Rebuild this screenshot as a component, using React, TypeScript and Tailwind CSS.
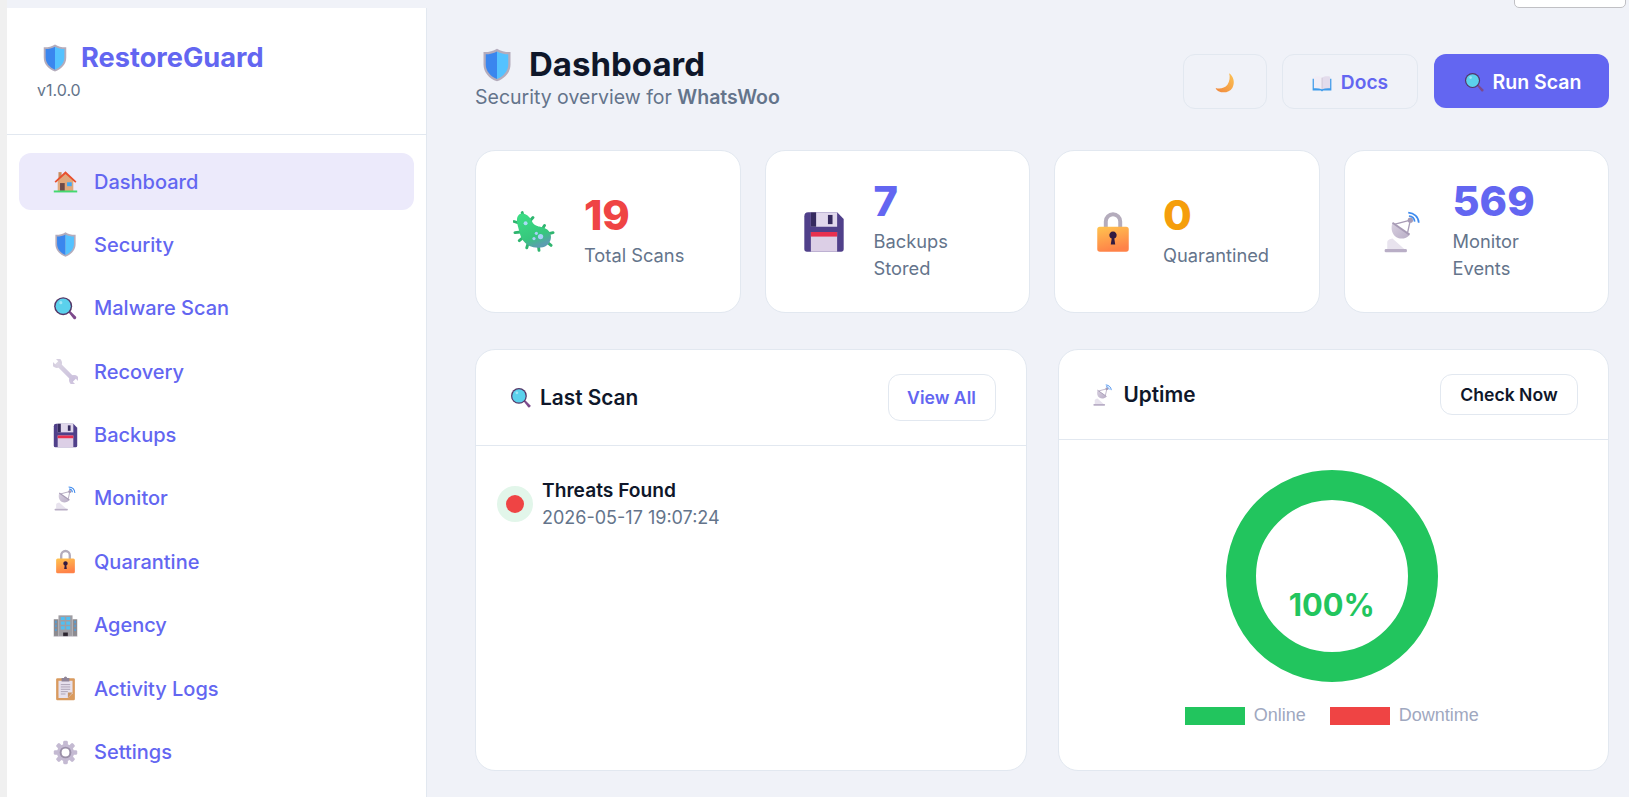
import type { ReactNode } from "react"

const Svg = ({ size = 24, children }: { size?: number; children: ReactNode }) => (
  <svg width={size} height={size} viewBox="0 0 32 32" className="shrink-0">
    {children}
  </svg>
)

type IconProps = { size?: number }

const Shield = ({ size }: IconProps) => (
  <Svg size={size}>
    <path d="M16 1.500c3.500 2.300 8 3.200 12 3v11c0 7-5 12.500-12 15-7-2.500-12-8-12-15v-11c4 .2 8.500-.7 12-3z" fill="#b4acbc" />
    <path d="M16 4v24.500C10.500 26.200 6 21.500 6 15.500V6.500c3.600 0 7-.8 10-2.500z" fill="#3a86ee" />
    <path d="M16 4v24.500c5.500-2.300 10-7 10-13V6.500c-3.600 0-7-.8-10-2.500z" fill="#54c2ff" />
  </Svg>
)

const House = ({ size }: IconProps) => (
  <Svg size={size}>
    <path d="M7 4h4v8H7z" fill="#c98d5f" />
    <path d="M6 13 16 5l10 8v15H6z" fill="#e0a87c" />
    <path d="M9 18h6v10H9z" fill="#6d4a48" />
    <path d="M18 17h6v5h-6z" fill="#3fa9f5" />
    <path d="M2 16 16 3l14 13-1.500 1.500L16 6.500 3.500 17.500z" fill="#e8502f" />
    <path d="M1 27.500h30V30H1z" fill="#44d96f" />
  </Svg>
)

const Magnifier = ({ size }: IconProps) => (
  <Svg size={size}>
    <path d="m19.500 20.500 2-2 8 8a2.200 2.200 0 0 1-3 3z" fill="#7d4a8c" />
    <circle cx="13" cy="13" r="11.500" fill="#533566" />
    <circle cx="13" cy="13" r="9.700" fill="#5bd1ec" />
    <circle cx="10" cy="8.500" r="2" fill="#9fe6f5" />
  </Svg>
)

const Wrench = ({ size }: IconProps) => (
  <Svg size={size}>
    <g transform="rotate(45 16 16)">
      <circle cx="0.500" cy="16" r="6.500" fill="#d6cfe0" />
      <circle cx="31.500" cy="16" r="6.500" fill="#cfc4de" />
      <rect x="0" y="13.200" width="32" height="5.600" fill="url(#wrenchGrad)" />
      <rect x="-7" y="13.300" width="7" height="5.400" fill="#fff" />
      <rect x="32" y="13.300" width="7" height="5.400" fill="#fff" />
    </g>
  </Svg>
)

const Floppy = ({ size }: IconProps) => (
  <Svg size={size}>
    <path d="M4 1h22l5 5v23a2 2 0 0 1-2 2H3a2 2 0 0 1-2-2V4a3 3 0 0 1 3-3z" fill="#50408a" />
    <path d="M6 1h20v11H6z" fill="#e1d8ec" />
    <path d="M6 1h4v11H6z" fill="#352a5e" />
    <path d="M19 3h3.500v7H19z" fill="#352a5e" />
    <path d="M6 16h20v15H6z" fill="#dccfe6" />
    <path d="M6 16h20v3.500H6z" fill="#e8304f" />
  </Svg>
)

const Satellite = ({ size }: IconProps) => (
  <Svg size={size}>
    <path d="M4 29v-5c0-2 2-2.500 4-3l9 8z" fill="#e8e3ee" />
    <rect x="2" y="29" width="17" height="2.500" rx="1" fill="#b9aec6" />
    <path d="M8 9 21 18c-2 3-7 4-10 2-3.500-2-4.500-7-3-11z" fill="url(#dishGrad)" />
    <path d="M8 9 21 18" stroke="#a79bb5" strokeWidth="1.400" />
    <path d="m10 10 11.600-3M19.500 16.500 21.600 7" stroke="#a79bb5" strokeWidth="1" />
    <circle cx="21.600" cy="7" r="2" fill="#a79bb5" />
    <path d="M20 1.300c4.500.3 7.800 3.300 8 7.600M20.500 3.800c2.400.2 4.200 2 4.400 4.300" stroke="#3f8bee" strokeWidth="1.300" fill="none" />
  </Svg>
)

const Lock = ({ size }: IconProps) => (
  <Svg size={size}>
    <path d="M9 14V8a7 7 0 0 1 14 0v6h-3V8a4 4 0 0 0-8 0v6z" fill="#b4acbc" />
    <rect x="4" y="12" width="24" height="19" rx="2" fill="url(#lockGrad)" />
    <path d="M14.300 25.500h3.400l-.7-4.500a2.800 2.800 0 1 0-2 0z" fill="#321b41" />
  </Svg>
)

const Building = ({ size }: IconProps) => (
  <Svg size={size}>
    <path d="M1 8h6v22H1zM25 8h6v22h-6z" fill="#8d8b90" />
    <path d="M7 3h18v27H7z" fill="#9f9da3" />
    <path d="M3 10h1.500v3H3zM3 15h1.500v3H3zM3 20h1.500v3H3zM27.500 10H29v3h-1.500zM27.500 15H29v3h-1.500zM27.500 20H29v3h-1.500z" fill="#40a4f0" />
    <path d="M10 5h5v4h-5zM17 5h5v4h-5zM10 11h5v4h-5zM17 11h5v4h-5zM10 17h5v4h-5zM17 17h5v4h-5z" fill="#51bff2" />
    <path d="M13 25h6v5h-6z" fill="#2c2530" />
    <path d="M1 30h30" stroke="#d6d2da" strokeWidth="1" />
  </Svg>
)

const Clipboard = ({ size }: IconProps) => (
  <Svg size={size}>
    <rect x="4" y="3" width="24" height="28" rx="1.500" fill="#d99a5e" />
    <path d="M7 6h18v16l-6 6H7z" fill="#e6e0ec" />
    <path d="M25 21h-6v7z" fill="#c79366" />
    <path d="M11 2.500h3a2 2 0 0 1 4 0h3V7H11z" fill="#8f8497" />
    <path d="M10 11h12M10 14h12M10 17h12M10 20h9M10 23h6" stroke="#9d93a8" strokeWidth="1" />
  </Svg>
)

const Gear = ({ size }: IconProps) => (
  <Svg size={size}>
    {[0, 45, 90, 135, 180, 225, 270, 315].map((angle) => (
      <rect key={angle} x="13" y="1" width="6" height="8" rx="1.800" fill="#c4bad2" transform={`rotate(${angle} 16 16)`} />
    ))}
    <circle cx="16" cy="16" r="11" fill="#c4bad2" />
    <circle cx="16" cy="16" r="7.500" fill="#9a8fa8" />
    <circle cx="16" cy="16" r="5" fill="#fff" />
  </Svg>
)

const Microbe = ({ size }: IconProps) => (
  <Svg size={size}>
    <g stroke="#2fb56f" strokeWidth="2.200" strokeLinecap="round">
      <path d="M7 1.200 8 6M15.200 5 12.500 8M24 11 21.500 15M30.500 16.500l-4 1M29 26.200l-3-2.500M19.800 30l-.5-4M10.500 28l1-3.500M4.800 22.600l3-2.500M1.500 16.500l4.500-.5M.8 8l4.500 1.500" />
    </g>
    <path d="M6 3c3-1 6 2 7.500 5 1 2.500 2.500 4 5.500 4.500 4 .5 8.500 2 9 6.500.4 4-2.500 7.500-7 8-5 .6-10-1.500-13-5.500C6 18.500 5.500 14 4.500 11 3.500 8 3.500 4 6 3z" fill="url(#bugGrad)" stroke="url(#bugGrad)" strokeWidth="1.800" />
    <circle cx="9.600" cy="9.400" r="1.500" fill="#a8dcf5" />
    <circle cx="21" cy="19.500" r="2" fill="#a8d0f8" />
    <circle cx="17.800" cy="17" r="1.200" fill="#a8d0f8" />
    <circle cx="16" cy="21" r="1.200" fill="#a8d0f8" />
  </Svg>
)

const Moon = ({ size }: IconProps) => (
  <Svg size={size}>
    <path d="M21 4c6 4 7.500 12 4 18-3.500 5.500-11 7-17 4-2-1-3-2.500-3.500-4 5 1.500 11 .5 14.500-4 2.800-4 3.500-9.500 2-14z" fill="url(#moonGrad)" />
  </Svg>
)

const Book = ({ size }: IconProps) => (
  <Svg size={size}>
    <path d="M1 9h30v19H18l-2 1.500L14 28H1z" fill="#3f9bea" />
    <path d="M3 6c4-1 9-1 13 1.500V26c-4-1.500-9-2-13-1.500z" fill="#f1edf6" />
    <path d="M29 6c-4-1-9-1-13 1.500V26c4-1.500 9-2 13-1.500z" fill="#e3dcec" />
    <path d="M16 7.500V26" stroke="#b4acbc" strokeWidth=".8" />
  </Svg>
)

const navItems = [
  { label: "Dashboard", icon: House, size: 25, active: true },
  { label: "Security", icon: Shield, size: 27 },
  { label: "Malware Scan", icon: Magnifier, size: 25 },
  { label: "Recovery", icon: Wrench, size: 25 },
  { label: "Backups", icon: Floppy, size: 25 },
  { label: "Monitor", icon: Satellite, size: 25 },
  { label: "Quarantine", icon: Lock, size: 25 },
  { label: "Agency", icon: Building, size: 25 },
  { label: "Activity Logs", icon: Clipboard, size: 25 },
  { label: "Settings", icon: Gear, size: 25 },
]

const stats = [
  { value: "19", label: "Total Scans", color: "text-[#ef4444]", icon: Microbe },
  { value: "7", label: "Backups Stored", color: "text-[#6366f1]", icon: Floppy },
  { value: "0", label: "Quarantined", color: "text-[#f59e0b]", icon: Lock },
  { value: "569", label: "Monitor Events", color: "text-[#6366f1]", icon: Satellite },
]

function Sidebar() {
  return (
    <aside className="mt-2 flex w-[420px] shrink-0 flex-col border-r border-[#e2e8f0] bg-white">
      <div className="h-[127px] border-b border-[#e2e8f0] pl-[30px] pt-[34px]">
        <div className="flex h-[32px] items-center gap-[11px] pl-[3px] text-[27.2px] font-bold text-[#6366f1]">
          <Shield size={30} />
          <span>RestoreGuard</span>
        </div>
        <div className="mt-[4px] text-[16px] leading-[24px] text-[#64748b]">v1.0.0</div>
      </div>
      <nav className="flex flex-col gap-[6.4px] px-3 pt-[18px]">
        {navItems.map((item) => (
          <a
            key={item.label}
            className={`flex h-[57px] items-center gap-4 rounded-[12px] pl-[34px] text-[20px] font-medium text-[#6366f1] ${item.active ? "bg-[#eceafb]" : ""}`}
          >
            <span className="flex w-[25px] justify-center">
              <item.icon size={item.size} />
            </span>
            <span>{item.label}</span>
          </a>
        ))}
      </nav>
    </aside>
  )
}

function StatCard({ stat }: { stat: (typeof stats)[number] }) {
  return (
    <div className="flex h-[163px] items-center gap-[29px] rounded-[20px] border border-[#e2e8f0] bg-white pl-[37px] pr-4">
      <stat.icon size={42} />
      <div className="pb-[6px]">
        <div className={`text-[41.6px] font-extrabold leading-[53px] ${stat.color}`}>{stat.value}</div>
        <div className="max-w-[115px] text-[18.3px] leading-[27px] text-[#64748b]">{stat.label}</div>
      </div>
    </div>
  )
}

function Donut() {
  return (
    <div className="relative mx-auto h-[212px] w-[212px]">
      <svg viewBox="0 0 212 212" className="h-full w-full">
        <circle cx="106" cy="106" r="91" fill="none" stroke="#22c55e" strokeWidth="30" />
      </svg>
      <div className="absolute inset-x-0 top-[116px] text-center text-[30.8px] font-bold leading-[38px] text-[#22c55e]">100%</div>
    </div>
  )
}

export default function App() {
  return (
    <div className="relative flex h-[797px] overflow-hidden bg-[#f0f2f8] font-['Inter',sans-serif]">
      <svg width="0" height="0" className="absolute">
        <defs>
          <linearGradient id="lockGrad" x1="0" y1="0" x2="0.3" y2="1">
            <stop offset="0" stopColor="#ffc44f" />
            <stop offset="1" stopColor="#ff8248" />
          </linearGradient>
          <linearGradient id="bugGrad" x1="0.2" y1="0" x2="0.6" y2="1">
            <stop offset="0" stopColor="#3bdc84" />
            <stop offset="0.7" stopColor="#36c77d" />
            <stop offset="1" stopColor="#5b9db0" />
          </linearGradient>
          <linearGradient id="moonGrad" x1="1" y1="0" x2="0" y2="1">
            <stop offset="0" stopColor="#fcc354" />
            <stop offset="1" stopColor="#f0863c" />
          </linearGradient>
          <linearGradient id="dishGrad" x1="0" y1="0" x2="1" y2="1">
            <stop offset="0" stopColor="#d8d0e0" />
            <stop offset="1" stopColor="#b9aec6" />
          </linearGradient>
          <linearGradient id="wrenchGrad" x1="0" y1="0" x2="1" y2="0">
            <stop offset="0" stopColor="#dbd5e3" />
            <stop offset="1" stopColor="#cabfdc" />
          </linearGradient>
        </defs>
      </svg>
      <div className="w-[7px] shrink-0 bg-[#f0f0f0]" />
      <Sidebar />
      <div className="absolute right-[3px] top-[-10px] h-[18px] w-[112px] rounded-[5px] border border-[#c0c0c4] bg-white" />
      <main className="flex-1 pl-[48px] pr-[20px] pt-[47px]">
        <header className="flex h-[62px] items-center justify-between">
          <div>
            <div className="flex h-[36px] translate-y-[1px] items-center gap-[14px] pl-[4px] text-[33px] font-bold text-[#0f172a]">
              <Shield size={36} />
              <span>Dashboard</span>
            </div>
            <p className="mt-[2px] text-[19.5px] leading-[26px] text-[#64748b]">
              Security overview for <strong className="font-semibold">WhatsWoo</strong>
            </p>
          </div>
          <div className="flex translate-y-[3px] items-center">
            <button className="flex h-[55px] w-[84px] items-center justify-center rounded-[12px] border border-[#e2e8f0] bg-[#f0f2f8] pt-[4px]">
              <Moon size={26} />
            </button>
            <button className="ml-[15px] flex h-[55px] w-[136px] items-center justify-center gap-[9px] rounded-[12px] border border-[#e2e8f0] pt-[3px] text-[19.2px] font-semibold text-[#6366f1]">
              <Book size={20} />
              Docs
            </button>
            <button className="ml-4 flex h-[54px] w-[175px] items-center justify-center gap-[8px] rounded-[12px] bg-[#6366f1] pl-[2px] pt-[3px] text-[19.5px] font-semibold text-white">
              <Magnifier size={21} />
              Run Scan
            </button>
          </div>
        </header>

        <section className="mt-[41px] grid grid-cols-4 gap-[24px]">
          {stats.map((stat) => (
            <StatCard key={stat.label} stat={stat} />
          ))}
        </section>

        <section className="mt-[36px] grid h-[422px] grid-cols-2 gap-[31px]">
          <div className="rounded-[20px] border border-[#e2e8f0] bg-white">
            <div className="flex items-center justify-between border-b border-[#e2e8f0] py-6 pl-[34px] pr-[30px]">
              <h3 className="flex items-center gap-[8px] text-[20.8px] font-semibold text-[#0f172a]">
                <Magnifier size={22} />
                Last Scan
              </h3>
              <button className="flex h-[47px] w-[108px] items-center justify-center rounded-[12px] border border-[#e2e8f0] pt-[2px] text-[17.6px] font-semibold text-[#6366f1]">
                View All
              </button>
            </div>
            <div className="flex items-center gap-[9px] px-[21px] pt-[31px]">
              <div className="flex h-[36px] w-[36px] items-center justify-center rounded-full bg-[#e2f6ea]">
                <div className="h-[18px] w-[18px] rounded-full bg-[#ef4444]" />
              </div>
              <div>
                <div className="text-[19.2px] font-semibold leading-[27px] text-[#0f172a]">Threats Found</div>
                <div className="text-[18px] leading-[27px] text-[#64748b]">2026-05-17 19:07:24</div>
              </div>
            </div>
          </div>

          <div className="rounded-[20px] border border-[#e2e8f0] bg-white">
            <div className="flex items-center justify-between border-b border-[#e2e8f0] px-[30px] py-6">
              <h3 className="flex items-center gap-[10px] pl-[3px] text-[20.8px] font-semibold text-[#0f172a]">
                <Satellite size={22} />
                Uptime
              </h3>
              <button className="flex h-[41px] w-[138px] items-center justify-center rounded-[12px] border border-[#e2e8f0] pt-[1px] text-[17.6px] font-semibold text-[#0f172a]">
                Check Now
              </button>
            </div>
            <div className="pr-[3px] pt-[30px]">
              <Donut />
              <div className="mt-[20px] flex items-center justify-center font-['Liberation_Sans',sans-serif] text-[18px] text-[#a0a8bf]">
                <div className="h-[18px] w-[60px] bg-[#22c55e]" />
                <span className="ml-[9px]">Online</span>
                <div className="ml-[24px] h-[18px] w-[60px] bg-[#ef4444]" />
                <span className="ml-[9px]">Downtime</span>
              </div>
            </div>
          </div>
        </section>
      </main>
    </div>
  )
}
